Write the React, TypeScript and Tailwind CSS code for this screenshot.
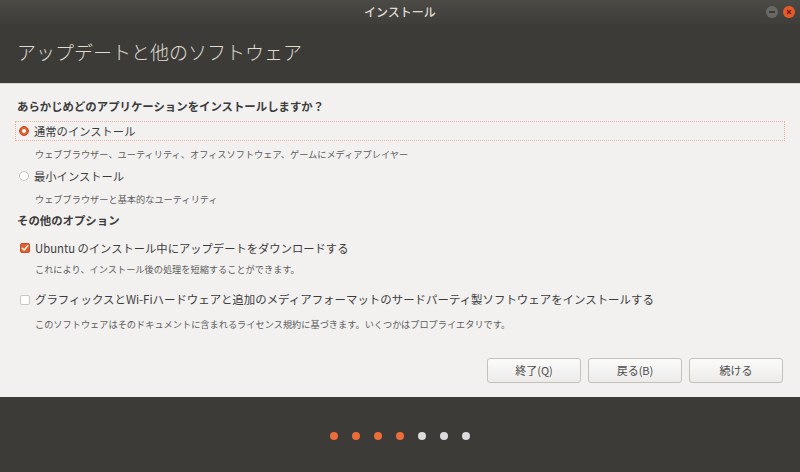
import React from "react";

const font = { fontFamily: '"Noto Sans CJK JP", "Noto Sans", sans-serif' };

function Radio({ checked }: { checked?: boolean }) {
  return checked ? (
    <span className="flex h-[10px] w-[10px] items-center justify-center rounded-full bg-[#e4612f] border border-[#c34f22]">
      <span className="h-[4px] w-[4px] rounded-full bg-white" />
    </span>
  ) : (
    <span className="h-[10px] w-[10px] rounded-full border border-[#c9c6c0] bg-white" />
  );
}

function Check({ checked }: { checked?: boolean }) {
  return checked ? (
    <span className="flex h-[10px] w-[10px] items-center justify-center rounded-[2px] bg-[#e4612f] border border-[#c34f22]">
      <svg width="8" height="8" viewBox="0 0 8 8">
        <path d="M1.2 4.2 L3.2 6 L6.8 1.6" stroke="white" strokeWidth="1.5" fill="none" strokeLinecap="round" strokeLinejoin="round" />
      </svg>
    </span>
  ) : (
    <span className="h-[10px] w-[10px] rounded-[2px] border border-[#c9c6c0] bg-white" />
  );
}

const buttons = ["終了(Q)", "戻る(B)", "続ける"];

export default function App() {
  return (
    <div className="flex h-[472px] w-[800px] flex-col bg-[#3c3b37]" style={font}>
      {/* タイトルバー */}
      <div className="relative flex h-[24px] items-center justify-center bg-gradient-to-b from-[#4c4a45] to-[#3f3e3a]">
        <span className="text-[12px] font-medium text-[#dfdbd2]">インストール</span>
        <div className="absolute right-[5px] top-[6px] flex gap-[5px]">
          <span className="flex h-[12px] w-[12px] items-center justify-center rounded-full bg-[#6a6863]">
            <span className="h-[1.5px] w-[6px] bg-[#3c3b37]" />
          </span>
          <span className="flex h-[12px] w-[12px] items-center justify-center rounded-full bg-[#ea5a28]">
            <svg width="6" height="6" viewBox="0 0 6 6">
              <path d="M1 1 L5 5 M5 1 L1 5" stroke="#5a2410" strokeWidth="1.2" />
            </svg>
          </span>
        </div>
      </div>

      {/* ヘッダー */}
      <div className="flex h-[59px] items-center px-[17px] pb-[2px]">
        <h1 className="text-[19px] font-light text-[#dfdbd2]">アップデートと他のソフトウェア</h1>
      </div>

      {/* 本文 */}
      <div className="flex h-[314px] flex-col border-t border-[#d8d5cf] bg-[#f2f1f0] px-[15px] pt-[13px] text-[#3c3c3c]">
        <div className="flex h-[20px] items-center px-[2px] text-[11.4px] font-bold">
          あらかじめどのアプリケーションをインストールしますか？
        </div>
        <div className="mt-[4px] flex h-[20px] items-center gap-[5px] border border-dotted border-[#f1b49c] pl-[3px] text-[11.3px]">
          <Radio checked />
          <span>通常のインストール</span>
        </div>
        <div className="mt-[4px] flex h-[20px] items-center pl-[20px] text-[9.2px] text-[#5c5c5c]">
          ウェブブラウザー、ユーティリティ、オフィスソフトウェア、ゲームにメディアプレイヤー
        </div>
        <div className="mt-[1px] flex h-[20px] items-center gap-[5px] pl-[4px] text-[11.3px]">
          <Radio />
          <span>最小インストール</span>
        </div>
        <div className="mt-[4px] flex h-[20px] items-center pl-[20px] text-[9.2px] text-[#5c5c5c]">
          ウェブブラウザーと基本的なユーティリティ
        </div>
        <div className="mt-[1px] flex h-[20px] items-center px-[2px] text-[11.4px] font-bold">
          その他のオプション
        </div>
        <div className="mt-[7px] flex h-[20px] items-center gap-[5px] pl-[5px] text-[11.3px]">
          <Check checked />
          <span>Ubuntu のインストール中にアップデートをダウンロードする</span>
        </div>
        <div className="mt-[2px] flex h-[20px] items-center pl-[20px] text-[9.2px] text-[#5c5c5c]">
          これにより、インストール後の処理を短縮することができます。
        </div>
        <div className="mt-[10px] flex h-[20px] items-center gap-[5px] pl-[5px] text-[11.45px]">
          <Check />
          <span>グラフィックスとWi-Fiハードウェアと追加のメディアフォーマットのサードパーティ製ソフトウェアをインストールする</span>
        </div>
        <div className="mt-[5px] flex h-[20px] items-center pl-[20px] text-[9.2px] text-[#5c5c5c]">
          このソフトウェアはそのドキュメントに含まれるライセンス規約に基づきます。いくつかはプロプライエタリです。
        </div>

        <div className="mt-auto mb-[14px] flex justify-end gap-[7px] pr-[2px]">
          {buttons.map((b) => (
            <button
              key={b}
              className="flex h-[25px] w-[94px] items-center justify-center rounded-[3px] border border-[#c4c1ba] bg-gradient-to-b from-[#fbfbfa] to-[#ecebe9] text-[11px] text-[#4c4c4c]"
            >
              {b}
            </button>
          ))}
        </div>
      </div>

      {/* 進捗ドット */}
      <div className="flex flex-1 items-center justify-center gap-[14px] pt-[2px]">
        {[0, 1, 2, 3, 4, 5, 6].map((i) => (
          <span
            key={i}
            className={
              i < 4
                ? "h-[8px] w-[8px] rounded-full bg-[#ec6c3a]"
                : "h-[8px] w-[8px] rounded-full bg-[#dcdcdc]"
            }
          />
        ))}
      </div>
    </div>
  );
}
